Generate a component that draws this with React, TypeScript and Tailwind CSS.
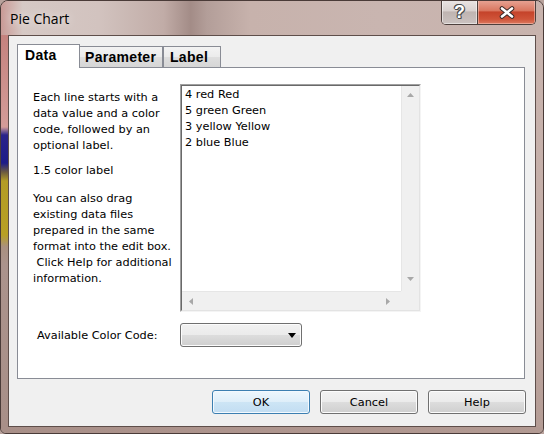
import React from "react";

const txt = "font-['DejaVu_Sans',sans-serif] text-[11.3px] text-black";

function UpArrow() {
  return (
    <svg width="7" height="4" viewBox="0 0 7 4"><polygon points="0,4 7,4 3.5,0" fill="#a8a8a8" /></svg>
  );
}
function DownArrow() {
  return (
    <svg width="7" height="4" viewBox="0 0 7 4"><polygon points="0,0 7,0 3.5,4" fill="#a8a8a8" /></svg>
  );
}
function LeftArrow() {
  return (
    <svg width="4" height="7" viewBox="0 0 4 7"><polygon points="4,0 4,7 0,3.5" fill="#a8a8a8" /></svg>
  );
}
function RightArrow() {
  return (
    <svg width="4" height="7" viewBox="0 0 4 7"><polygon points="0,0 0,7 4,3.5" fill="#a8a8a8" /></svg>
  );
}

function Btn({ label, def }: { label: string; def?: boolean }) {
  return (
    <div
      className={
        def
          ? "w-[98px] h-[24px] rounded-[3px] border border-[#3c7fb1] bg-[linear-gradient(180deg,#eef7fd_0%,#deeef9_50%,#cde5f5_50%,#c2ddf2_100%)] shadow-[inset_0_0_0_1px_#f3f9fe] flex items-center justify-center"
          : "w-[98px] h-[24px] rounded-[3px] border border-[#707070] bg-[linear-gradient(180deg,#f2f2f2_0%,#ebebeb_50%,#dddddd_50%,#cfcfcf_100%)] shadow-[inset_0_0_0_1px_#fcfcfc] flex items-center justify-center"
      }
    >
      <span className={txt + " leading-[16px] pt-[2px]"}>{label}</span>
    </div>
  );
}

export default function App() {
  return (
    <div className="w-[544px] h-[434px] bg-[#b8a29c]">
      <div className="w-[544px] h-[434px] flex flex-col rounded-t-[8px] rounded-b-[6px] border border-[#4a3b38] overflow-hidden bg-[#c5afa9]">
        {/* Title bar */}
        <div className="h-[34px] flex items-start bg-[linear-gradient(90deg,#c99a96_0%,#d6c9c5_4%,#d2c3bf_18%,#c1aca7_30%,#a38c87_35%,#b39e99_38%,#c7b2ac_46%,#c9b5b0_70%,#c8b3ad_100%)]">
          <div className="pl-[9px] pt-[8px] text-[14px] leading-[19px] font-['Open_Sans',sans-serif] text-black [text-shadow:0_0_8px_rgba(255,255,255,0.85)]">
            Pie Chart
          </div>
          <div className="ml-auto mr-[7px] -mt-px flex h-[25px] border border-t-0 border-[#4d403d] rounded-b-[5px] overflow-hidden">
            <div className="w-[35px] h-full flex items-center justify-center bg-[linear-gradient(180deg,#ebe5e4_0%,#d9d1cf_45%,#bfb4b1_50%,#cbc2c0_100%)] shadow-[inset_0_0_0_1px_rgba(255,255,255,0.5)]">
              <span className="font-['Liberation_Sans',sans-serif] font-bold text-[18px] leading-[18px] text-white [text-shadow:-1px_0_#4a4a4a,1px_0_#4a4a4a,0_-1px_#4a4a4a,0_1px_#4a4a4a,1px_1px_#4a4a4a,-1px_-1px_#4a4a4a]">
                ?
              </span>
            </div>
            <div className="w-[58px] h-full border-l border-[#4d403d] flex items-center justify-center bg-[linear-gradient(180deg,#e8a596_0%,#d9765f_45%,#c5432a_50%,#cf5439_80%,#dc7a60_100%)] shadow-[inset_0_0_0_1px_rgba(255,220,210,0.45)]">
              <svg width="16" height="13" viewBox="0 0 16 13">
                <line x1="3" y1="2.5" x2="13" y2="10.5" stroke="#3b2a28" strokeWidth="4.6" strokeLinecap="round" />
                <line x1="13" y1="2.5" x2="3" y2="10.5" stroke="#3b2a28" strokeWidth="4.6" strokeLinecap="round" />
                <line x1="3" y1="2.5" x2="13" y2="10.5" stroke="#ffffff" strokeWidth="2.6" strokeLinecap="round" />
                <line x1="13" y1="2.5" x2="3" y2="10.5" stroke="#ffffff" strokeWidth="2.6" strokeLinecap="round" />
              </svg>
            </div>
          </div>
        </div>

        {/* Middle */}
        <div className="h-[392px] flex">
          <div className="w-[7px] h-full bg-[linear-gradient(180deg,#c5827e_0px,#cd928e_55px,#d39c98_92px,#2a238a_100px,#1d1b88_128px,#6b5a40_137px,#b39c26_146px,#b8a024_200px,#a99080_212px,#ab938c_230px,#a88f88_100%)]" />
          <div className="w-[528px] h-full border border-[#5e4e4a] bg-[#f0f0f0] flex flex-col pl-[8px] pr-[10px] pt-[8px]">
            {/* Tabs */}
            <div className="h-[23px] flex items-end">
              <div className="relative z-10 w-[63px] h-[24px] -mb-px bg-white border border-b-0 border-[#898c95] pl-[7px] pt-[2px] font-['Liberation_Sans',sans-serif] font-bold text-[14px] leading-[16px] tracking-[0.3px] text-black">
                Data
              </div>
              <div className="w-[83px] h-[21px] border-t border-r border-[#898c95] bg-[linear-gradient(180deg,#f3f3f3_0%,#ebebeb_50%,#dedede_51%,#d6d6d6_100%)] pl-[5px] pt-[2px] font-['Liberation_Sans',sans-serif] font-bold text-[14px] leading-[16px] tracking-[0.3px] text-black">
                Parameter
              </div>
              <div className="w-[58px] h-[21px] border border-b-0 border-[#898c95] bg-[linear-gradient(180deg,#f3f3f3_0%,#ebebeb_50%,#dedede_51%,#d6d6d6_100%)] pl-[6px] pt-[2px] font-['Liberation_Sans',sans-serif] font-bold text-[14px] leading-[16px] tracking-[0.3px] text-black">
                Label
              </div>
            </div>

            {/* Panel */}
            <div className="w-[508px] h-[312px] bg-white border border-[#898c95] pl-[15px] pt-[16px] flex flex-col">
              <div className="flex">
                <div className={"w-[147px] mt-[6px] leading-[16px] " + txt}>
                  <div>
                    Each line starts with a<br />
                    data value and a color<br />
                    code, followed by an<br />
                    optional label.
                  </div>
                  <div className="mt-[9px]">1.5 color label</div>
                  <div className="mt-[12px]">
                    You can also drag<br />
                    existing data files<br />
                    prepared in the same<br />
                    format into the edit box.<br />
                    &nbsp;Click Help for additional<br />
                    information.
                  </div>
                </div>
                {/* Edit box */}
                <div className="w-[241px] h-[228px] border border-t-[#a0a0a0] border-l-[#a0a0a0] border-r-[#f4f4f4] border-b-[#f4f4f4]">
                  <div className="w-full h-full border border-t-[#696969] border-l-[#696969] border-r-[#e3e3e3] border-b-[#e3e3e3] bg-white flex flex-col">
                    <div className="flex-1 flex">
                      <div className={"flex-1 pl-[3px] mt-[1px] leading-[16px] " + txt}>
                        <div>4 red Red</div>
                        <div>5 green Green</div>
                        <div>3 yellow Yellow</div>
                        <div>2 blue Blue</div>
                      </div>
                      <div className="w-[18px] h-full bg-[#f0f0f0] border-l border-[#e6e6e6] flex flex-col items-center justify-between pt-[7px] pb-[10px]">
                        <UpArrow />
                        <DownArrow />
                      </div>
                    </div>
                    <div className="h-[19px] flex">
                      <div className="flex-1 h-full bg-[#f0f0f0] border-t border-[#e6e6e6] flex items-center justify-between pl-[7px] pr-[11px]">
                        <LeftArrow />
                        <RightArrow />
                      </div>
                      <div className="w-[18px] h-full bg-[#f0f0f0]" />
                    </div>
                  </div>
                </div>
              </div>

              <div className="mt-[11px] flex items-center">
                <div className={"w-[147px] pl-[4px] pt-[2px] leading-[16px] " + txt}>Available Color Code:</div>
                <div className="w-[122px] h-[24px] rounded-[3px] border border-[#707070] bg-[linear-gradient(180deg,#f2f2f2_0%,#ebebeb_50%,#dddddd_50%,#cfcfcf_100%)] shadow-[inset_0_0_0_1px_#fcfcfc] flex items-center justify-end pr-[5px]">
                  <svg width="8" height="5" viewBox="0 0 8 5"><polygon points="0,0 8,0 4,5" fill="#000" /></svg>
                </div>
              </div>
            </div>

            {/* Buttons */}
            <div className="mt-[11px] -mr-px flex justify-end gap-[10px]">
              <Btn label="OK" def />
              <Btn label="Cancel" />
              <Btn label="Help" />
            </div>
          </div>
          <div className="w-[7px] h-full bg-[linear-gradient(180deg,#c9b4ae_0%,#c2aca6_60%,#b49c95_100%)]" />
        </div>

        {/* Bottom */}
        <div className="flex-1 bg-[linear-gradient(90deg,#a88f88_0%,#ae958e_50%,#b29a93_100%)]" />
      </div>
    </div>
  );
}
